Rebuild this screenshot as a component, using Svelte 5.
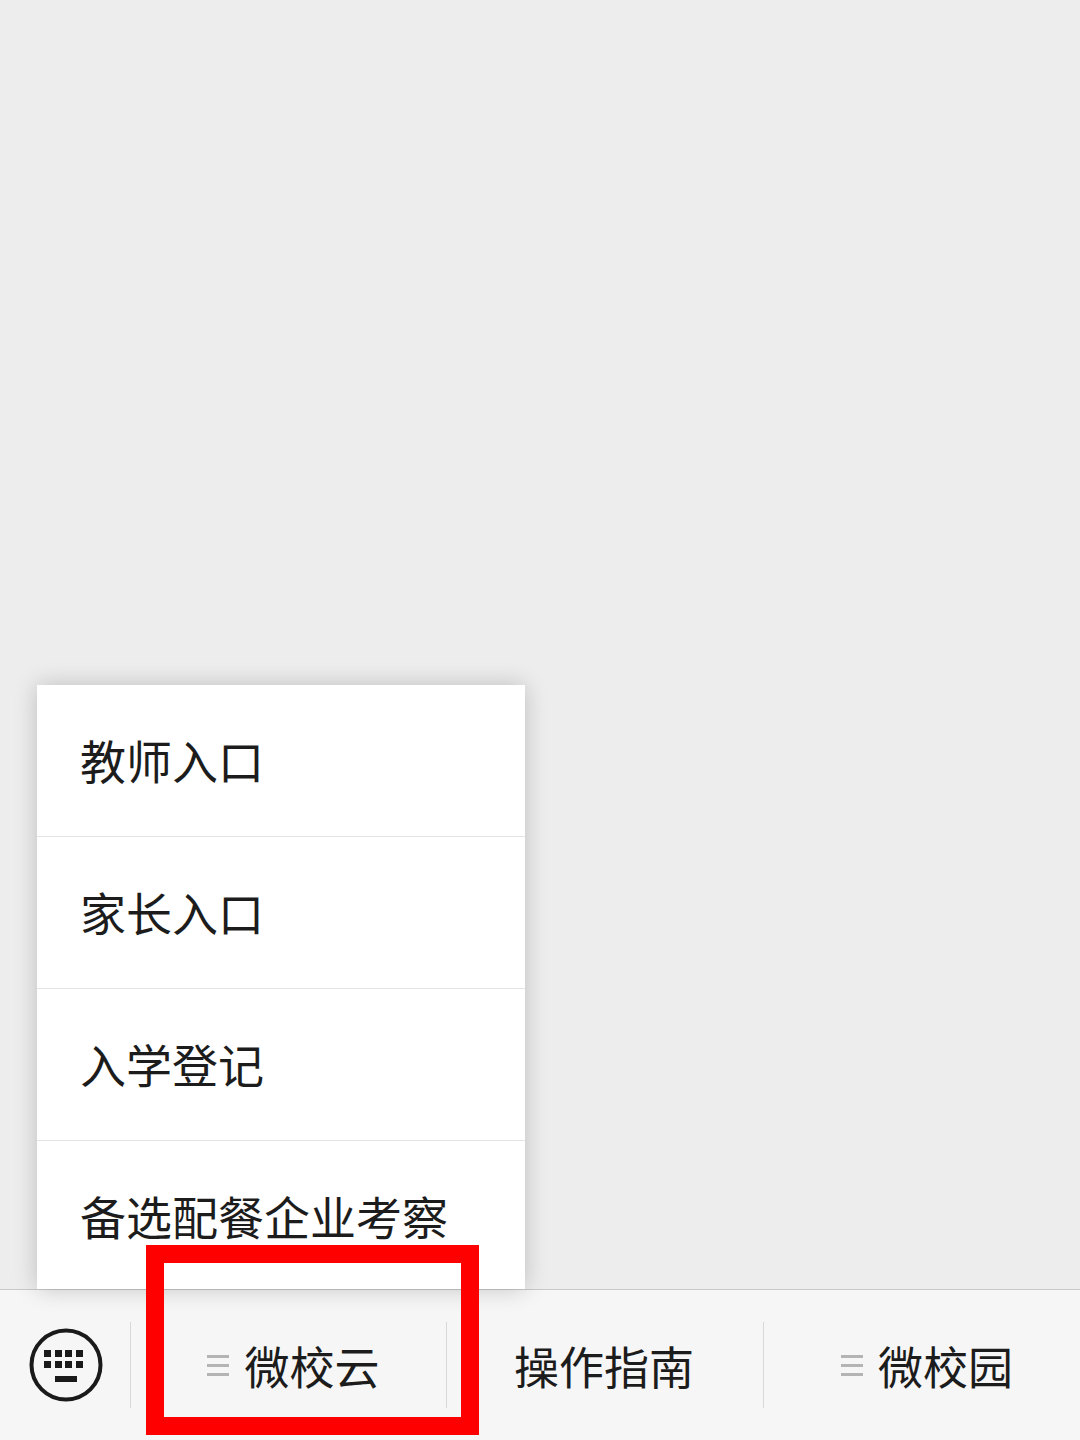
<script lang="ts">
  const menuItems = ["教师入口", "家长入口", "入学登记", "备选配餐企业考察"];

  const tabs = [
    { label: "微校云", hasMenu: true },
    { label: "操作指南", hasMenu: false },
    { label: "微校园", hasMenu: true },
  ];

  const keyColumns = [15, 26, 36, 47];
  const keyRows = [22, 33];
</script>

<div class="page">
  <div class="content"></div>

  <nav class="bar">
    <button class="switch" aria-label="keyboard">
      <svg width="74" height="74" viewBox="0 0 74 74">
        <circle cx="37" cy="37" r="34.5" fill="none" stroke="#1a1a1a" stroke-width="4" />
        {#each keyRows as y}
          {#each keyColumns as x}
            <rect {x} {y} width="7" height="7" fill="#1a1a1a" />
          {/each}
        {/each}
        <rect x="26" y="48" width="22" height="6" fill="#1a1a1a" />
      </svg>
    </button>

    {#each tabs as tab}
      <div class="tab" class:with-menu={tab.hasMenu}>
        {#if tab.hasMenu}
          <span class="burger"><i></i><i></i><i></i></span>
        {/if}
        <span class="label">{tab.label}</span>
      </div>
    {/each}
  </nav>

  <ul class="menu">
    {#each menuItems as item}
      <li>{item}</li>
    {/each}
  </ul>

  <div class="highlight"></div>
</div>

<style>
  :global(body) {
    margin: 0;
    background: #ededed;
  }

  .page {
    position: relative;
    width: 1080px;
    height: 1440px;
    display: flex;
    flex-direction: column;
    overflow: hidden;
    background: #ededed;
    font-family: "Noto Sans CJK SC", "Noto Sans", sans-serif;
    color: #1c1c1c;
  }

  .content {
    flex: 1;
  }

  .bar {
    height: 150px;
    display: grid;
    grid-template-columns: 130px 316px 317px 317px;
    align-items: center;
    background: #f6f6f6;
    border-top: 1px solid #c9c9c9;
  }

  .switch {
    height: 100%;
    padding: 0 0 0 2px;
    border: none;
    background: none;
    display: flex;
    align-items: center;
    justify-content: center;
  }

  .tab {
    height: 86px;
    box-sizing: border-box;
    padding: 0 2px 0 0;
    display: flex;
    align-items: center;
    justify-content: center;
    gap: 15px;
    border-left: 1px solid #d8d8d8;
    font-size: 45px;
    line-height: 1;
  }

  .tab.with-menu {
    padding-left: 10px;
    padding-right: 0;
  }

  .burger {
    width: 22px;
    display: flex;
    flex-direction: column;
    gap: 6px;
  }

  .burger i {
    display: block;
    height: 3px;
    background: #b4b4b4;
  }

  .menu {
    position: absolute;
    left: 37px;
    bottom: 151px;
    width: 488px;
    margin: 0;
    padding: 0;
    list-style: none;
    background: #fff;
    box-shadow: 0 0 22px rgba(0, 0, 0, 0.2);
  }

  .menu li {
    height: 152px;
    box-sizing: border-box;
    padding: 0 0 4px 43px;
    display: flex;
    align-items: center;
    font-size: 46px;
    line-height: 1;
    border-bottom: 1px solid #e4e4e4;
  }

  .menu li:last-child {
    height: 148px;
    padding-bottom: 0;
    border-bottom: none;
  }

  .highlight {
    position: absolute;
    left: 146px;
    top: 1245px;
    width: 333px;
    height: 190px;
    box-sizing: border-box;
    border: 18px solid #fe0000;
  }
</style>
